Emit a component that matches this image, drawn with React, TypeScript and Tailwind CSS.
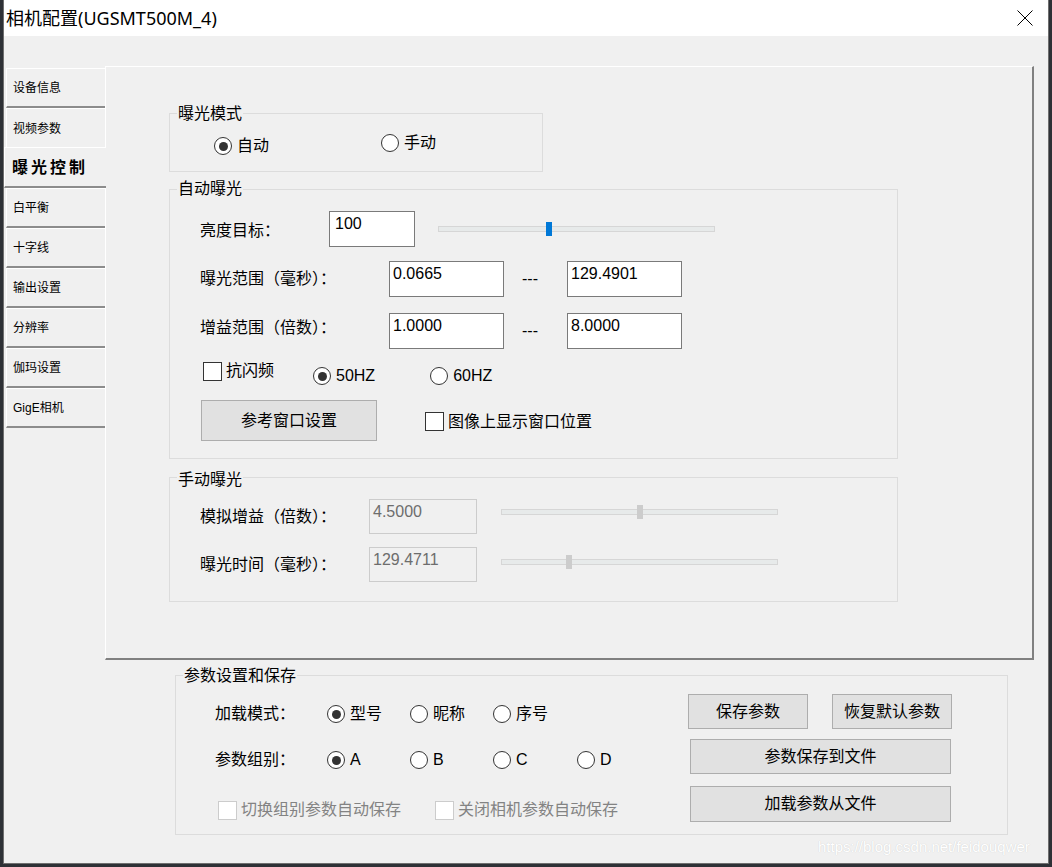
import React from "react";

// 单选按钮
function Radio({
  checked = false,
  label,
  className = "",
}: {
  checked?: boolean;
  label: string;
  className?: string;
}) {
  return (
    <div className={`flex items-center gap-[5px] ${className}`}>
      <span className="flex h-[18px] w-[18px] shrink-0 items-center justify-center rounded-full border border-[#333333] bg-white">
        {checked && <span className="h-[9px] w-[9px] rounded-full bg-[#333333]" />}
      </span>
      <span className="whitespace-nowrap leading-[20px]">{label}</span>
    </div>
  );
}

// 复选框
function Check({
  label,
  disabled = false,
  className = "",
}: {
  label: string;
  disabled?: boolean;
  className?: string;
}) {
  return (
    <div className={`flex items-center gap-[4px] ${className}`}>
      <span
        className={`h-[19px] w-[19px] shrink-0 border bg-white ${
          disabled ? "border-[#cccccc]" : "border-[#333333]"
        }`}
      />
      <span className={`whitespace-nowrap leading-[20px] ${disabled ? "text-[#838383]" : ""}`}>
        {label}
      </span>
    </div>
  );
}

// 分组框
function Group({
  title,
  className = "",
  titleClass = "-top-[10px]",
  children,
}: {
  title: string;
  className?: string;
  titleClass?: string;
  children?: React.ReactNode;
}) {
  return (
    <div className={`relative border border-[#dcdcdc] ${className}`}>
      <span
        className={`absolute left-[7px] bg-[#f0f0f0] px-[1px] leading-[20px] whitespace-nowrap ${titleClass}`}
      >
        {title}
      </span>
      {children}
    </div>
  );
}

function Edit({
  value,
  className = "",
  disabled = false,
}: {
  value: string;
  className?: string;
  disabled?: boolean;
}) {
  return (
    <div
      className={`shrink-0 border pl-[3px] pt-[2px] leading-[20px] ${
        disabled
          ? "border-[#cccccc] bg-[#f0f0f0] text-[#6d6d6d]"
          : "border-[#7a7a7a] bg-white"
      } ${className}`}
    >
      {value}
    </div>
  );
}

function Slider({
  thumbClass,
  disabled = false,
  className = "",
}: {
  thumbClass: string;
  disabled?: boolean;
  className?: string;
}) {
  return (
    <div
      className={`relative h-[6px] w-[277px] shrink-0 border border-[#d6d6d6] bg-[#e7eaea] ${className}`}
    >
      <span
        className={`absolute -top-[5px] h-[14px] w-[6px] ${
          disabled ? "bg-[#cccccc]" : "bg-[#0078d7]"
        } ${thumbClass}`}
      />
    </div>
  );
}

function Btn({ label, className = "" }: { label: string; className?: string }) {
  return (
    <div
      className={`flex shrink-0 items-center justify-center border border-[#adadad] bg-[#e1e1e1] leading-[20px] ${className}`}
    >
      {label}
    </div>
  );
}

const tabs = [
  "设备信息",
  "视频参数",
  "曝光控制",
  "白平衡",
  "十字线",
  "输出设置",
  "分辨率",
  "伽玛设置",
  "GigE相机",
];

export default function App() {
  const selected = 2;

  return (
    <div className="relative h-[867px] w-[1052px] overflow-hidden bg-[#2e3136] font-['Liberation_Sans','Noto_Sans_CJK_SC',sans-serif] text-[16px] text-black">
      <div className="ml-[3px] flex h-[864px] w-[1046px] flex-col border-x border-b border-[#6f6f6f] bg-[#f0f0f0]">
        {/* 标题栏 */}
        <div className="flex h-[36px] shrink-0 items-center justify-between bg-white pl-[2px] pr-[15px]">
          <span className="font-['Noto_Sans','Noto_Sans_CJK_SC',sans-serif] text-[18px] leading-[24px]">
            相机配置(UGSMT500M_4)
          </span>
          <svg width="16" height="16" viewBox="0 0 16 16">
            <path d="M0.5 0.5 L15.5 15.5 M15.5 0.5 L0.5 15.5" stroke="#000" strokeWidth="1" />
          </svg>
        </div>

        {/* 选项卡 */}
        <div className="mt-[30px] flex">
          <div className="ml-[2px] mt-[2px] flex w-[99px] shrink-0 flex-col">
            {tabs.map((t, i) =>
              i === selected ? (
                <div
                  key={t}
                  className="relative z-10 -ml-[2px] -mt-[1px] flex h-[41px] w-[102px] items-center border-l border-t border-b-2 border-l-white border-t-white border-b-[#8c8c8c] bg-[#f0f0f0] pl-[7px] pt-[1px] text-[16px] font-bold tracking-[3px]"
                >
                  {t}
                </div>
              ) : (
                <div
                  key={t}
                  className={`flex h-[40px] items-center border-l border-t border-l-white border-t-white pl-[6px] text-[12px] ${
                    i === selected - 1 ? "" : "border-b-2 border-b-[#8c8c8c]"
                  }`}
                >
                  {t}
                </div>
              ),
            )}
          </div>

          <div className="flex h-[594px] w-[929px] shrink-0 flex-col border-t border-l border-r-2 border-b-2 border-t-white border-l-white border-r-[#808080] border-b-[#808080] pl-[63px] pt-[46px]">
            {/* 曝光模式 */}
            <Group title="曝光模式" className="h-[59px] w-[374px]">
              <div className="flex items-start pl-[44px]">
                <Radio checked label="自动" className="mt-[22px]" />
                <Radio label="手动" className="ml-[112px] mt-[19px]" />
              </div>
            </Group>

            {/* 自动曝光 */}
            <Group
              title="自动曝光"
              titleClass="-top-[11px]"
              className="mt-[17px] flex h-[270px] w-[729px] flex-col"
            >
              <div className="mt-[21px] flex h-[36px] items-center">
                <span className="w-[159px] shrink-0 pl-[30px] pt-[4px] leading-[20px]">亮度目标：</span>
                <Edit value="100" className="h-[36px] w-[86px] pl-[5px]" />
                <Slider className="ml-[23px]" thumbClass="left-[107px]" />
              </div>

              <div className="mt-[14px] flex h-[36px] items-center">
                <span className="w-[219px] shrink-0 pl-[30px] leading-[20px]">曝光范围（毫秒）：</span>
                <Edit value="0.0665" className="h-[36px] w-[115px]" />
                <span className="w-[63px] shrink-0 pl-[18px] leading-[20px]">---</span>
                <Edit value="129.4901" className="h-[36px] w-[115px]" />
              </div>

              <div className="mt-[16px] flex h-[36px] items-center">
                <span className="w-[219px] shrink-0 pb-[6px] pl-[30px] leading-[20px]">增益范围（倍数）：</span>
                <Edit value="1.0000" className="h-[36px] w-[115px]" />
                <span className="w-[63px] shrink-0 pl-[18px] leading-[20px]">---</span>
                <Edit value="8.0000" className="h-[36px] w-[115px]" />
              </div>

              <div className="mt-[12px] flex h-[24px] items-start">
                <Check label="抗闪频" className="ml-[33px]" />
                <Radio checked label="50HZ" className="ml-[39px] mt-[5px]" />
                <Radio label="60HZ" className="ml-[55px] mt-[5px]" />
              </div>

              <div className="mt-[15px] flex items-center">
                <Btn label="参考窗口设置" className="ml-[31px] h-[41px] w-[176px]" />
                <Check label="图像上显示窗口位置" className="ml-[48px] mt-[2px]" />
              </div>
            </Group>

            {/* 手动曝光 */}
            <Group
              title="手动曝光"
              titleClass="-top-[8px]"
              className="mt-[18px] flex h-[125px] w-[729px] flex-col"
            >
              <div className="mt-[21px] flex items-start">
                <span className="flex h-[35px] w-[199px] shrink-0 items-center pl-[30px] leading-[20px]">
                  模拟增益（倍数）：
                </span>
                <Edit disabled value="4.5000" className="h-[35px] w-[108px]" />
                <Slider disabled className="ml-[24px] mt-[10px]" thumbClass="left-[135px]" />
              </div>
              <div className="mt-[13px] flex items-start">
                <span className="flex h-[35px] w-[199px] shrink-0 items-center pl-[30px] leading-[20px]">
                  曝光时间（毫秒）：
                </span>
                <Edit disabled value="129.4711" className="h-[35px] w-[108px]" />
                <Slider disabled className="ml-[24px] mt-[12px]" thumbClass="left-[64px]" />
              </div>
            </Group>
          </div>
        </div>

        {/* 参数设置和保存 */}
        <Group title="参数设置和保存" className="ml-[171px] mt-[15px] flex h-[160px] w-[833px]">
          <div className="flex w-[512px] shrink-0 flex-col">
            <div className="mt-[28px] flex h-[20px] items-center">
              <span className="w-[151px] shrink-0 pl-[39px] leading-[20px]">加载模式：</span>
              <Radio checked label="型号" className="w-[83px]" />
              <Radio label="昵称" className="w-[83px]" />
              <Radio label="序号" className="w-[83px]" />
            </div>
            <div className="mt-[26px] flex h-[20px] items-center">
              <span className="w-[151px] shrink-0 pl-[39px] leading-[20px]">参数组别：</span>
              <Radio checked label="A" className="w-[83px]" />
              <Radio label="B" className="w-[83px]" />
              <Radio label="C" className="w-[84px]" />
              <Radio label="D" className="w-[83px]" />
            </div>
            <div className="mt-[30px] flex h-[20px] items-center">
              <Check disabled label="切换组别参数自动保存" className="ml-[42px]" />
              <Check disabled label="关闭相机参数自动保存" className="ml-[34px]" />
            </div>
          </div>
          <div className="flex flex-col pt-[18px]">
            <div className="flex gap-[24px]">
              <Btn label="保存参数" className="h-[35px] w-[120px]" />
              <Btn label="恢复默认参数" className="h-[35px] w-[120px]" />
            </div>
            <Btn label="参数保存到文件" className="ml-[2px] mt-[10px] h-[35px] w-[261px]" />
            <Btn label="加载参数从文件" className="ml-[2px] mt-[12px] h-[36px] w-[261px]" />
          </div>
        </Group>
      </div>

      {/* 水印 */}
      <span className="absolute left-[818px] top-[836px] font-['Liberation_Sans',sans-serif] text-[15px] leading-[22px] text-white [text-shadow:0_0_1px_rgba(0,0,0,0.18)]">
        https://blog.csdn.net/feidouqwer
      </span>
    </div>
  );
}
